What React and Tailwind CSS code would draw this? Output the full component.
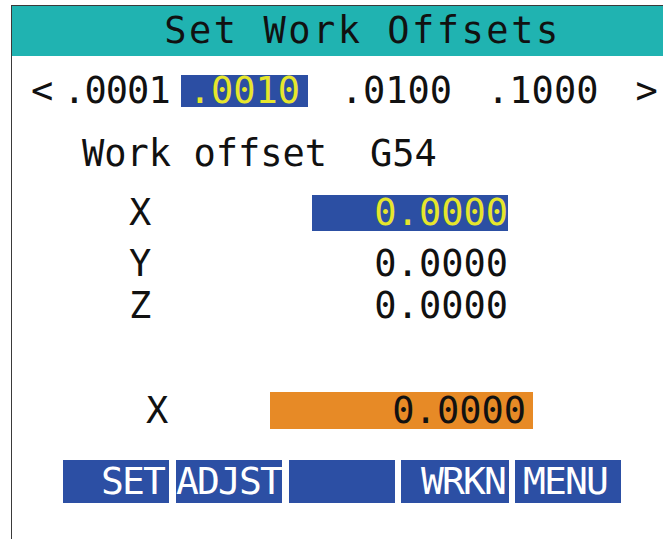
import React from "react";

const mono = { fontFamily: '"DejaVu Sans Mono", monospace' };

const AxisRow = ({ label, value, active, className = "" }) => (
  <div className={`flex h-[36px] leading-[36px] ${className}`}>
    <span className="ml-[117px] w-[40px]">{label}</span>
    <div
      className={`ml-[143px] w-[196px] text-right ${
        active ? "bg-[#2c4fa3] text-[#e6e62c]" : ""
      }`}
    >
      {value}
    </div>
  </div>
);

const SoftKey = ({ label, className = "" }) => (
  <div
    className={`h-[43px] w-[106px] bg-[#2c4fa4] text-white leading-[43px] text-[38px] tracking-[-1.9px] ${className}`}
  >
    {label}
  </div>
);

export default function App() {
  return (
    <div className="w-[663px] h-[539px] bg-white overflow-hidden pt-[5px] pl-[11px]" style={mono}>
      <div className="h-[534px] border-t border-l border-[#3a3a3a] text-[37px] text-[#111]">
        {/* Title bar */}
        <div className="h-[50px] bg-[#20b3b1] pl-[50px] text-center leading-[50px] tracking-[2.5px]">
          Set Work Offsets
        </div>

        {/* Increment selector */}
        <div className="flex mt-[19px] h-[32px] leading-[32px]">
          <span className="ml-[19px]">&lt;</span>
          <span className="ml-[10px] tracking-[-1px]">.0001</span>
          <div className="ml-[11px] w-[127px] pl-[8px] bg-[#2c4ea3] text-[#e6e62c]">.0010</div>
          <span className="ml-[33px]">.0100</span>
          <span className="ml-[35px]">.1000</span>
          <span className="ml-[37px]">&gt;</span>
        </div>

        {/* Offset name */}
        <div className="flex mt-[29px] h-[36px] leading-[36px]">
          <span className="ml-[70px]">Work offset</span>
          <span className="ml-[43px]">G54</span>
        </div>

        <AxisRow label="X" value="0.0000" active className="mt-[23px]" />
        <AxisRow label="Y" value="0.0000" className="mt-[15px]" />
        <AxisRow label="Z" value="0.0000" className="mt-[6px]" />

        {/* Input line */}
        <div className="flex mt-[68px] h-[37px] leading-[37px]">
          <span className="ml-[134px] w-[40px]">X</span>
          <div className="ml-[84px] w-[263px] pr-[7px] bg-[#e78a26] text-right">0.0000</div>
        </div>

        {/* Soft keys */}
        <div className="flex mt-[31px] ml-[51px]">
          <SoftKey label="SET" className="text-right pr-[5px]" />
          <SoftKey label="ADJST" className="ml-[7px]" />
          <SoftKey label="" className="ml-[7px]" />
          <SoftKey label="WRKN" className="ml-[6px] w-[108px] text-right pr-[4px]" />
          <SoftKey label="MENU" className="ml-[6px] w-[105px] pl-[8px]" />
        </div>
      </div>
    </div>
  );
}
